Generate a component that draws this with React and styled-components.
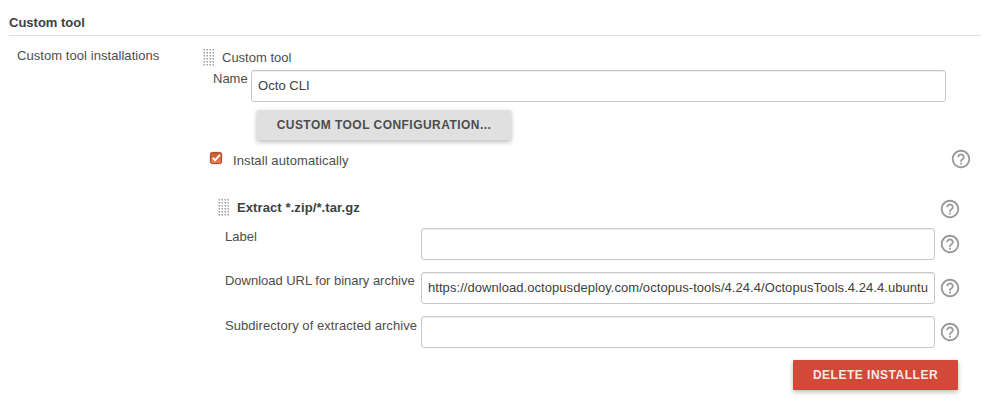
import React from "react";
import styled, { createGlobalStyle } from "styled-components";

const GlobalStyle = createGlobalStyle`
  * { box-sizing: border-box; }
  body {
    margin: 0;
    background: #fff;
    color: #4d4d4d;
    font: 13px/16px "Liberation Sans", Arial, sans-serif;
  }
`;

const Page = styled.main`
  width: 993px;
  height: 402px;
  padding: 14px 12px 0 9px;
  overflow: hidden;
`;

const SectionTitle = styled.h1`
  margin: 0;
  height: 22px;
  border-bottom: 1px solid #dedede;
  font-size: 13px;
  line-height: 17px;
  font-weight: bold;
  color: #404040;
`;

const Body = styled.div`
  display: grid;
  grid-template-columns: 186px 1fr;
  padding: 12px 0 0 8px;
`;

const Caption = styled.div`
  letter-spacing: 0.06px;
  white-space: nowrap;
`;

const Tool = styled.section`
  display: flex;
  flex-direction: column;
`;

const GripRow = styled.header`
  display: flex;
  height: ${(p) => p.$height}px;
  margin-left: ${(p) => p.$indent || 0}px;
  font-weight: ${(p) => (p.$bold ? "bold" : "normal")};
  letter-spacing: ${(p) => (p.$bold ? 0.1 : 0)}px;
  color: ${(p) => (p.$bold ? "#404040" : "inherit")};
`;

const GripTitle = styled.span`
  flex: 1;
  margin: ${(p) => p.$top}px 0 0 8px;
`;

const Grip = styled.svg`
  display: block;
  width: 11px;
  height: 17px;
  margin-top: 1px;
`;

const FieldRow = styled.div`
  display: grid;
  grid-template-columns: ${(p) => p.$label}px ${(p) => p.$input}px auto;
  justify-content: start;
  height: 32px;
  margin: 0 0 ${(p) => p.$gap}px ${(p) => p.$indent}px;
`;

const FieldLabel = styled.label`
  padding-top: ${(p) => p.$top ?? 1}px;
  letter-spacing: ${(p) => p.$spacing ?? 0}px;
  white-space: nowrap;
`;

const TextInput = styled.input`
  display: block;
  width: 100%;
  height: 32px;
  padding: 0 6px ${(p) => p.$lift || 0}px;
  border: 1px solid #c8c8c8;
  border-radius: 3px;
  outline: none;
  background: #fff;
  box-shadow: inset 0 1px 1px rgba(0, 0, 0, 0.075);
  color: #404040;
  font: inherit;
  letter-spacing: 0.055px;
`;

const Button = styled.button`
  width: ${(p) => p.$width}px;
  height: 30px;
  padding: 0;
  border: 0;
  border-radius: 1px;
  background: ${(p) => (p.$danger ? "#d24939" : "#e0e0e0")};
  color: ${(p) => (p.$danger ? "#f5e9e7" : "#4d4d4d")};
  box-shadow: 0 2px 5px rgba(0, 0, 0, 0.28);
  font: bold 12px/30px "Liberation Sans", Arial, sans-serif;
  letter-spacing: ${(p) => p.$spacing}px;
  white-space: nowrap;
`;

const ConfigArea = styled.div`
  height: 41px;
  padding-left: 54px;
`;

const CheckRow = styled.div`
  display: flex;
  height: 47px;
  padding-left: 7px;
`;

const CheckBox = styled.svg`
  display: block;
  width: 14px;
  height: 14px;
  margin: 0 10px 0 -1px;
`;

const CheckLabel = styled.label`
  flex: 1;
  padding-top: 2px;
  letter-spacing: 0.1px;
`;

const HelpIcon = styled.svg`
  display: block;
  flex: none;
  width: 22px;
  height: 22px;
  margin: ${(p) => p.$top}px ${(p) => p.$right || 0}px 0 ${(p) => p.$left || 0}px;
  fill: #999;
`;

const Actions = styled.footer`
  display: flex;
  justify-content: flex-end;
  padding-right: 23px;
`;

function Help(props) {
  return (
    <HelpIcon viewBox="0 0 24 24" aria-label="Help" {...props}>
      <path d="M11 18h2v-2h-2v2zm1-16C6.48 2 2 6.48 2 12s4.48 10 10 10 10-4.48 10-10S17.52 2 12 2zm0 18c-4.41 0-8-3.59-8-8s3.59-8 8-8 8 3.59 8 8-3.59 8-8 8zm0-14c-2.21 0-4 1.79-4 4h2c0-1.1.9-2 2-2s2 .9 2 2c0 2-3 1.75-3 5h2c0-2.25 3-2.5 3-5 0-2.21-1.79-4-4-4z" />
    </HelpIcon>
  );
}

function DragGrip() {
  const dots = [];
  for (let y = 0; y < 17; y += 3) {
    for (let x = 0; x < 11; x += 3) {
      dots.push(
        <g key={`${x}-${y}`}>
          <rect x={x} y={y} width="2" height="2" fill="#c2c2c2" />
          <rect x={x + 1} y={y} width="1" height="1" fill="#a8a8a8" />
          <rect x={x} y={y + 1} width="1" height="1" fill="#eeeeee" />
        </g>
      );
    }
  }
  return <Grip viewBox="0 0 11 17" shapeRendering="crispEdges">{dots}</Grip>;
}

const fields = [
  { id: "label", label: "Label", value: "" },
  {
    id: "url",
    label: "Download URL for binary archive",
    value: "https://download.octopusdeploy.com/octopus-tools/4.24.4/OctopusTools.4.24.4.ubuntu.16.04-x64.tar.gz",
    spacing: -0.02,
    lift: 2,
  },
  { id: "subdir", label: "Subdirectory of extracted archive", value: "", top: 2, spacing: 0.06 },
];

export default function App() {
  return (
    <>
      <GlobalStyle />
      <Page>
        <SectionTitle>Custom tool</SectionTitle>
        <Body>
          <Caption>Custom tool installations</Caption>
          <Tool>
            <GripRow $height={22}>
              <DragGrip />
              <GripTitle $top={2}>Custom tool</GripTitle>
            </GripRow>
            <FieldRow $label={38} $input={695} $indent={10} $gap={8}>
              <FieldLabel htmlFor="name">Name</FieldLabel>
              <TextInput id="name" defaultValue="Octo CLI" $lift={1} />
            </FieldRow>
            <ConfigArea>
              <Button $width={254} $spacing={0.46}>CUSTOM TOOL CONFIGURATION...</Button>
            </ConfigArea>
            <CheckRow>
              <CheckBox viewBox="0 0 14 14" role="checkbox" aria-checked="true">
                <defs>
                  <linearGradient id="tick-fill" x1="0" y1="0" x2="0" y2="1">
                    <stop offset="0" stopColor="#c9572d" />
                    <stop offset="1" stopColor="#e97b50" />
                  </linearGradient>
                </defs>
                <rect x="0.5" y="0.5" width="13" height="13" rx="3" fill="#f3d8cd" />
                <rect x="1.5" y="1.5" width="11" height="11" rx="1.8" fill="url(#tick-fill)" stroke="#ad4f2c" />
                <path d="M3.7 6.9 6 9.3 10.9 3.8" fill="none" stroke="#fff" strokeWidth="2" />
              </CheckBox>
              <CheckLabel>Install automatically</CheckLabel>
              <Help $top={-3} $right={9} />
            </CheckRow>
            <GripRow $height={30} $indent={15} $bold>
              <DragGrip />
              <GripTitle $top={2}>Extract *.zip/*.tar.gz</GripTitle>
              <Help $top={0} $right={20} />
            </GripRow>
            {fields.map((f) => (
              <FieldRow key={f.id} $label={196} $input={514} $indent={22} $gap={12}>
                <FieldLabel htmlFor={f.id} $top={f.top} $spacing={f.spacing}>{f.label}</FieldLabel>
                <TextInput id={f.id} defaultValue={f.value} $lift={f.lift} />
                <Help $top={5} $left={4} />
              </FieldRow>
            ))}
            <Actions>
              <Button $danger $width={165} $spacing={0.5}>DELETE INSTALLER</Button>
            </Actions>
          </Tool>
        </Body>
      </Page>
    </>
  );
}
